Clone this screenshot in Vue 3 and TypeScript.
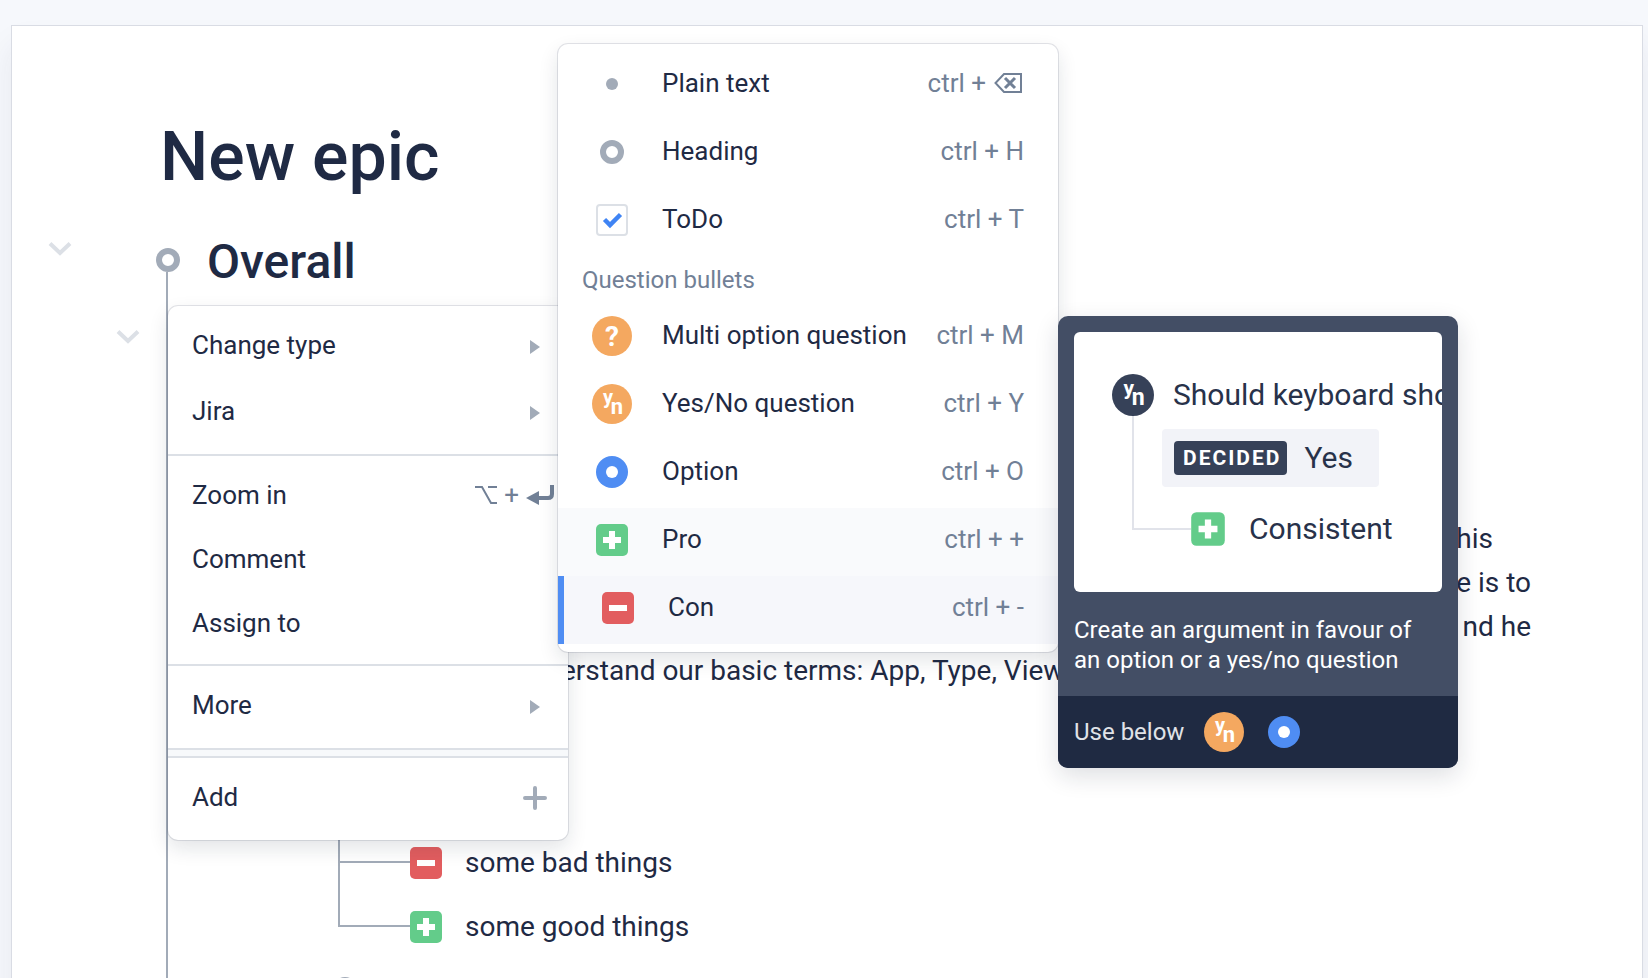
<script setup lang="ts">
import { defineComponent, h } from 'vue'

type BulletKind = 'plain' | 'heading' | 'todo' | 'multi' | 'yesno' | 'option' | 'pro' | 'con'

interface TypeItem {
  kind: BulletKind
  label: string
  keys: string
  state?: 'hover' | 'active'
}

const circle = (r: number, fill: string) => h('circle', { cx: 20, cy: 20, r, fill })
const box = (fill: string) => h('rect', { x: 4, y: 4, width: 32, height: 32, rx: 5, fill })
const glyph = (x: number, y: number, size: number, text: string) =>
  h('text', {
    x, y, fill: '#fff', 'font-size': size, 'font-weight': 700,
    'font-family': 'Roboto, sans-serif', 'text-anchor': 'middle',
  }, text)

const Bullet = defineComponent({
  props: { kind: { type: String, required: true }, tone: { type: String, default: '#f4a860' } },
  setup(props) {
    const shapes = () => {
      switch (props.kind) {
        case 'plain': return [circle(6, '#a2abb8')]
        case 'heading': return [h('circle', { cx: 20, cy: 20, r: 9, fill: '#fff', stroke: '#a2abb8', 'stroke-width': 6 })]
        case 'todo': return [
          h('rect', { x: 5, y: 5, width: 30, height: 30, rx: 3, fill: '#fff', stroke: '#dce0e6', 'stroke-width': 2 }),
          h('path', { d: 'M12.5 19.5 L18 25 L28.5 14.5', fill: 'none', stroke: '#3f84f4', 'stroke-width': 4.5 }),
        ]
        case 'multi': return [circle(20, props.tone), glyph(20, 30, 28, '?')]
        case 'yesno': return [circle(20, props.tone), glyph(16, 20, 20, 'y'), glyph(25, 30, 22, 'n')]
        case 'option': return [circle(16, '#4f8df3'), circle(6, '#fff')]
        case 'pro': return [box('#63cc8a'), h('path', { d: 'M11 20H29M20 11V29', stroke: '#fff', 'stroke-width': 6 })]
        default: return [box('#e25d5f'), h('path', { d: 'M11 20H29', stroke: '#fff', 'stroke-width': 6 })]
      }
    }
    return () => h('svg', { width: 40, height: 40, viewBox: '0 0 40 40', 'aria-hidden': 'true' }, shapes())
  },
})

const plainTypes: TypeItem[] = [
  { kind: 'plain', label: 'Plain text', keys: 'ctrl +' },
  { kind: 'heading', label: 'Heading', keys: 'ctrl + H' },
  { kind: 'todo', label: 'ToDo', keys: 'ctrl + T' },
]
const questionTypes: TypeItem[] = [
  { kind: 'multi', label: 'Multi option question', keys: 'ctrl + M' },
  { kind: 'yesno', label: 'Yes/No question', keys: 'ctrl + Y' },
  { kind: 'option', label: 'Option', keys: 'ctrl + O' },
  { kind: 'pro', label: 'Pro', keys: 'ctrl + +', state: 'hover' },
  { kind: 'con', label: 'Con', keys: 'ctrl + -', state: 'active' },
]
const groups = [
  { title: '', items: plainTypes },
  { title: 'Question bullets', items: questionTypes },
]
const args: { kind: BulletKind; text: string }[] = [
  { kind: 'con', text: 'some bad things' },
  { kind: 'pro', text: 'some good things' },
]
</script>

<template>
  <div class="app">
    <main class="page">
      <h1>New epic</h1>
      <section class="outline">
        <div class="heading-row">
          <button class="fold" aria-label="Collapse Overall">
            <svg width="24" height="16" viewBox="0 0 24 16"><path d="M2 2.5 L12 12 L22 2.5" /></svg>
          </button>
          <svg class="ring" width="24" height="24" viewBox="0 0 24 24"><circle cx="12" cy="12" r="9" /></svg>
          <h2>Overall</h2>
        </div>
        <div class="branch">
          <button class="fold" aria-label="Collapse item">
            <svg width="24" height="16" viewBox="0 0 24 16"><path d="M2 2.5 L12 12 L22 2.5" /></svg>
          </button>
          <div class="note">
            <p class="tail"><span>his</span><br />e is to<br />nd he</p>
            <p class="lead">erstand our basic terms: App, Type, View</p>
          </div>
          <ul class="args">
            <li v-for="a in args" :key="a.text"><Bullet :kind="a.kind" /><span>{{ a.text }}</span></li>
          </ul>
          <svg class="ring next" width="24" height="24" viewBox="0 0 24 24"><circle cx="12" cy="12" r="9" /></svg>
        </div>
      </section>
    </main>

    <nav class="menu" aria-label="Item actions">
      <div class="group">
        <button class="tall"><span>Change type</span><i class="arrow"></i></button>
        <button class="tall"><span>Jira</span><i class="arrow"></i></button>
      </div>
      <div class="group">
        <button>
          <span>Zoom in</span>
          <span class="keys">
            <svg width="22" height="20" viewBox="0 0 22 20"><path d="M0 2H7L16 18H22M13 2H22" fill="none" stroke="currentColor" stroke-width="2" /></svg>
            <span>+</span>
            <svg width="28" height="20" viewBox="0 0 28 20"><path d="M26 0V9Q26 13 22 13H10" fill="none" stroke="currentColor" stroke-width="4" /><path d="M0 13L13 6V20Z" fill="currentColor" /></svg>
          </span>
        </button>
        <button><span>Comment</span></button>
        <button><span>Assign to</span></button>
      </div>
      <div class="group">
        <button class="tall"><span>More</span><i class="arrow"></i></button>
      </div>
      <div class="band"></div>
      <div class="group">
        <button class="tall add">
          <span>Add</span>
          <svg width="24" height="24" viewBox="0 0 24 24"><path d="M2 12H22M12 2V22" stroke="#a2abb8" stroke-width="4" stroke-linecap="round" /></svg>
        </button>
      </div>
    </nav>

    <div class="types">
      <template v-for="g in groups" :key="g.title">
        <h3 v-if="g.title">{{ g.title }}</h3>
        <button v-for="t in g.items" :key="t.label" :class="t.state">
          <Bullet :kind="t.kind" />
          <span class="label">{{ t.label }}</span>
          <span class="keys">
            {{ t.keys }}
            <svg v-if="t.kind === 'plain'" width="30" height="20" viewBox="0 0 30 20">
              <path d="M10 1H27V19H10L1.5 10Z" fill="none" stroke="currentColor" stroke-width="2" />
              <path d="M11 5L21 15M21 5L11 15" fill="none" stroke="currentColor" stroke-width="3" />
            </svg>
          </span>
        </button>
      </template>
    </div>

    <aside class="hint">
      <div class="hint-main">
        <div class="sample">
          <div class="ask"><Bullet kind="yesno" tone="#364158" /><span>Should keyboard sho</span></div>
          <div class="answer">
            <div class="verdict"><b>DECIDED</b><span>Yes</span></div>
            <div class="reason"><Bullet kind="pro" /><span>Consistent</span></div>
          </div>
        </div>
        <p>Create an argument in favour of an option or a yes/no question</p>
      </div>
      <footer><span>Use below</span><Bullet kind="yesno" /><Bullet kind="option" /></footer>
    </aside>
  </div>
</template>

<style>
body { margin: 0; background: #f6f8fc; }
</style>

<style scoped>
.app {
  position: relative;
  box-sizing: border-box;
  height: 100vh;
  padding: 26px 6px 0 12px;
  overflow: hidden;
  font: 26px/40px Roboto, "Liberation Sans", sans-serif;
  color: #1f2a44;
  background: #f6f8fc;
}
svg { display: block; flex: none; }
h1, h2, h3, p, ul { margin: 0; padding: 0; font-weight: 400; }
button {
  border: 0;
  background: none;
  font: inherit;
  color: inherit;
  text-align: left;
  cursor: pointer;
}

.page {
  box-sizing: border-box;
  min-height: 100%;
  padding: 91px 100px 0 20px;
  background: #fff;
  box-shadow: 0 0 0 1px #d9dce4, 0 20px 30px rgba(40, 40, 80, 0.08);
}
h1 { padding-left: 128px; font-size: 68px; line-height: 80px; font-weight: 500; }
.heading-row {
  display: flex;
  align-items: center;
  height: 64px;
  margin-top: 31px;
}
h2 { padding: 3px 0 0 27px; font-size: 48px; line-height: 64px; font-weight: 500; }
.fold { display: block; padding: 0; }
.fold path { fill: none; stroke: #dce0e6; stroke-width: 4; }
.heading-row .fold { width: 124px; padding: 0 0 22px 16px; }
.ring circle { fill: #fff; stroke: #a2abb8; stroke-width: 6; }
.branch {
  height: 800px;
  margin-left: 134px;
  margin-top: -20px;
  border-left: 2px solid #a2abb8;
}
.branch .fold { margin-left: -52px; padding-top: 57px; }
.note { padding-top: 172px; font-size: 28px; line-height: 44px; }
.tail { width: 1363px; text-align: right; white-space: nowrap; }
.tail span { padding-right: 38px; }
.lead { margin-left: 393px; white-space: nowrap; }
.args {
  width: 500px;
  margin-left: 170px;
  padding-top: 138px;
  list-style: none;
  font-size: 28px;
}
.args li {
  position: relative;
  display: flex;
  align-items: center;
  gap: 19px;
  height: 64px;
  padding-left: 68px;
}
.args li::before {
  content: "";
  position: absolute;
  left: 0;
  bottom: 32px;
  width: 72px;
  height: 64px;
  box-sizing: border-box;
  border: solid #a2abb8;
  border-width: 0 0 2px 2px;
}
.next { margin-left: 165px; margin-top: 18px; }

.menu, .types {
  position: absolute;
  box-sizing: border-box;
  border-radius: 10px;
  background: #fff;
  box-shadow: 0 0 0 1px rgba(30, 40, 70, 0.12), 0 8px 20px rgba(20, 30, 50, 0.12);
}
.menu { left: 168px; top: 306px; width: 400px; overflow: clip; }
.group { padding: 8px 0; }
.group + .group, .band, .band + .group { border-top: 2px solid #dce0e6; }
.band { height: 6px; background: #f7f9fb; }
.menu button {
  display: flex;
  align-items: center;
  justify-content: space-between;
  width: 100%;
  height: 64px;
  padding: 0 14px 2px 24px;
}
.menu button.tall { height: 66px; padding: 0 28px 0 24px; }
.menu button.add { padding: 0 21px 2px 24px; }
.tall > span { padding-bottom: 4px; }
.add > span { padding-bottom: 2px; }
.arrow {
  border: solid transparent;
  border-width: 7px 0 7px 10px;
  border-left-color: #a2abb8;
}
.keys { display: flex; align-items: center; gap: 8px; color: #718096; white-space: nowrap; }
.menu .keys { gap: 7px; }

.types { left: 558px; top: 44px; width: 500px; padding: 8px 0; }
.types h3 { height: 48px; padding-left: 24px; box-sizing: border-box; font-size: 24px; line-height: 48px; color: #718096; }
.types button {
  display: flex;
  align-items: center;
  box-sizing: border-box;
  width: 100%;
  height: 68px;
  padding: 0 34px 4px;
}
.types .label { flex: 1; padding: 0 0 2px 30px; }
.types .keys { padding-bottom: 2px; }
.types .hover { background: #f9fafc; }
.types .active { border-left: 6px solid #4f8df3; background: #f6f7fb; }

.hint {
  position: absolute;
  left: 1058px;
  top: 316px;
  width: 400px;
  overflow: clip;
  border-radius: 10px;
  background: #434e65;
  color: #fff;
  font-size: 24px;
  line-height: 30px;
  box-shadow: 0 8px 24px rgba(20, 30, 50, 0.14);
}
.hint-main { padding: 16px 16px 21px; }
.hint p { padding-top: 23px; }
.sample {
  box-sizing: border-box;
  height: 260px;
  padding: 42px 0 0 38px;
  overflow: hidden;
  border-radius: 6px;
  background: #fff;
  color: #28324a;
  font-size: 30px;
  line-height: 42px;
  white-space: nowrap;
}
.sample svg { width: 42px; height: 42px; }
.ask { display: flex; gap: 19px; }
.answer {
  box-sizing: border-box;
  height: 114px;
  margin-left: 20px;
  padding-top: 13px;
  border-left: 2px solid #e1e3ea;
}
.verdict {
  display: flex;
  align-items: center;
  gap: 17px;
  width: 217px;
  height: 58px;
  box-sizing: border-box;
  margin-left: 28px;
  padding-left: 12px;
  border-radius: 4px;
  background: #f2f3f8;
}
.verdict b {
  padding: 0 6px 0 9px;
  border-radius: 4px;
  background: #364158;
  color: #fff;
  font-size: 21px;
  line-height: 34px;
  letter-spacing: 2px;
}
.reason { display: flex; align-items: center; height: 42px; margin-top: 21px; }
.reason::before { content: ""; width: 57px; height: 2px; margin-right: -4px; background: #e1e3ea; }
.reason span { padding-left: 20px; }
.hint footer {
  display: flex;
  align-items: center;
  gap: 20px;
  height: 72px;
  padding: 0 16px;
  background: #1f2a42;
  color: #e0e3e8;
}
</style>
